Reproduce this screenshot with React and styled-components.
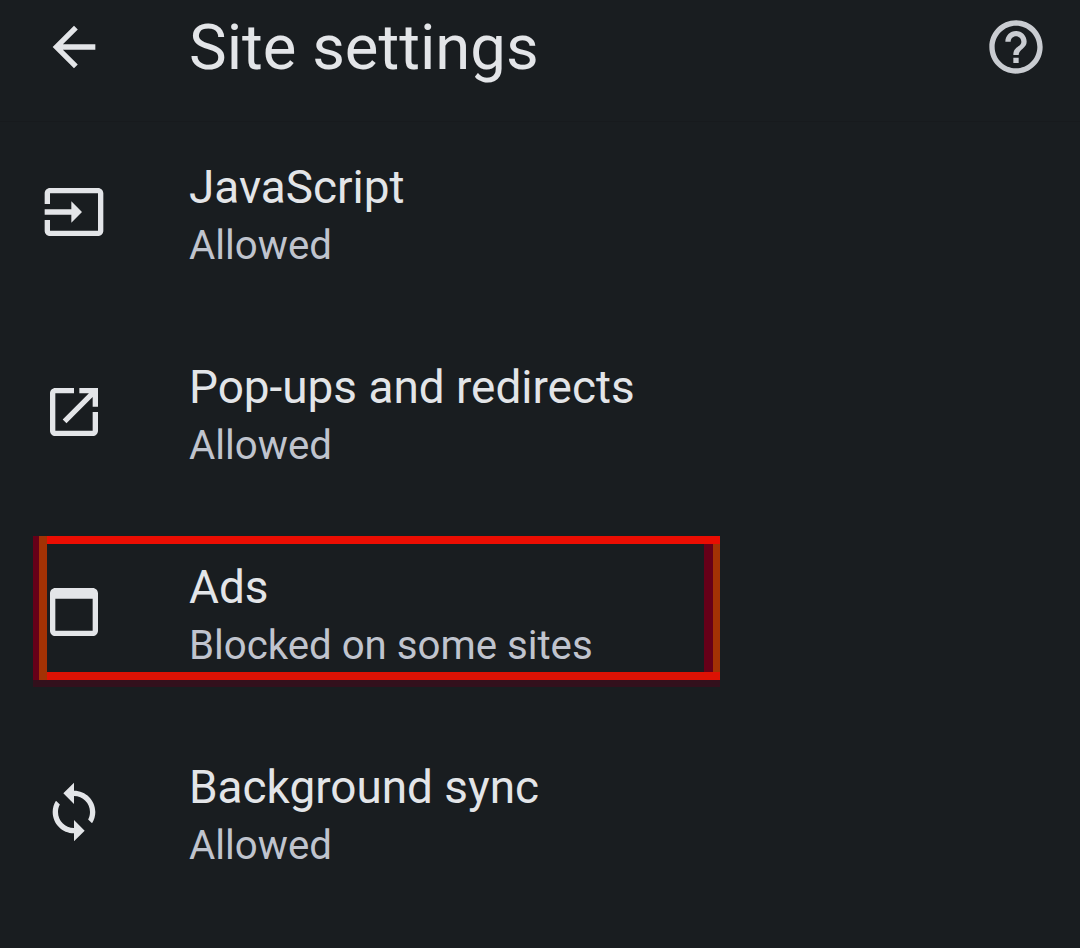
import React from "react";
import styled, { createGlobalStyle } from "styled-components";

const GlobalStyle = createGlobalStyle`
  html, body {
    margin: 0;
    padding: 0;
    background: #191d20;
  }
`;

const Page = styled.div`
  width: 1080px;
  height: 948px;
  overflow: hidden;
  background: #191d20;
  font-family: Roboto, "Liberation Sans", sans-serif;
`;

const Header = styled.header`
  height: 122px;
  box-sizing: border-box;
  padding: 0 32px 28px 42px;
  display: flex;
  align-items: center;
  border-bottom: 1px solid #171a1d;
`;

const Title = styled.h1`
  flex: 1;
  margin: 0 0 0 83px;
  font-size: 63.4px;
  line-height: 68px;
  font-weight: 400;
  color: #e3e5e8;
`;

const Icon = styled.svg`
  width: 64px;
  height: 64px;
  flex: none;
  fill: ${props => props.color || "#e3e5e8"};
`;

const Row = styled.div`
  height: 200px;
  box-sizing: border-box;
  padding: 0 0 21px 42px;
  display: flex;
  align-items: center;
`;

const RowText = styled.div`
  margin-left: 83px;
  padding-top: 10px;
`;

const RowTitle = styled.div`
  font-size: 45.9px;
  line-height: 58px;
  color: #e3e5e8;
`;

const RowStatus = styled.div`
  margin-top: 1px;
  font-size: 40.2px;
  line-height: 58px;
  color: #c0c4ce;
`;

const Highlight = styled.div`
  position: absolute;
  left: 33px;
  top: 536px;
  width: 687px;
  height: 144px;
  box-sizing: border-box;
  border-top: 8px solid #ea0d02;
  border-bottom: 8px solid #dd1204;
  box-shadow: 0 7px 0 #33101c;

  &::before {
    content: "";
    position: absolute;
    top: -8px;
    bottom: -8px;
    left: 0;
    width: 6px;
    background: #660018;
  }

  &::after {
    content: "";
    position: absolute;
    top: -8px;
    bottom: -8px;
    left: 6px;
    width: 8px;
    background: #a33204;
  }
`;

const HighlightRight = styled.div`
  position: absolute;
  top: 0;
  bottom: 0;
  right: 0;
  width: 16px;
  border-left: 9px solid #660018;
  border-right: 7px solid #a33204;
  box-sizing: border-box;
`;

const settings = [
  {
    name: "JavaScript",
    status: "Allowed",
    icon: "M21 3.01H3c-1.1 0-2 .9-2 2V9h2V4.99h18v14.03H3V15H1v4.01c0 1.1.9 1.98 2 1.98h18c1.1 0 2-.88 2-1.98v-14c0-1.11-.9-2-2-2zM11 16l4-4-4-4v3H1v2h10v3z"
  },
  {
    name: "Pop-ups and redirects",
    status: "Allowed",
    icon: "M19 19H5V5h7V3H5c-1.11 0-2 .9-2 2v14c0 1.1.89 2 2 2h14c1.1 0 2-.9 2-2v-7h-2v7zM14 3v2h3.59l-9.83 9.83 1.41 1.41L19 6.41V10h2V3h-7z"
  },
  {
    name: "Ads",
    status: "Blocked on some sites",
    icon: "M19 3H5c-1.1 0-2 .9-2 2v14c0 1.1.9 2 2 2h14c1.1 0 2-.9 2-2V5c0-1.1-.9-2-2-2zm0 16H5V7h14v12z"
  },
  {
    name: "Background sync",
    status: "Allowed",
    icon: "M12 4V1L8 5l4 4V6c3.31 0 6 2.69 6 6 0 1.01-.25 1.97-.7 2.8l1.46 1.46C19.54 15.03 20 13.57 20 12c0-4.42-3.58-8-8-8zm0 14c-3.31 0-6-2.69-6-6 0-1.01.25-1.97.7-2.8L5.24 7.74C4.46 8.97 4 10.43 4 12c0 4.42 3.58 8 8 8v3l4-4-4-4v3z"
  }
];

const backArrow = "M20 11H7.83l5.59-5.59L12 4l-8 8 8 8 1.41-1.41L7.83 13H20v-2z";
const helpCircle = "M11 18h2v-2h-2v2zm1-16C6.48 2 2 6.48 2 12s4.48 10 10 10 10-4.48 10-10S17.52 2 12 2zm0 18c-4.41 0-8-3.59-8-8s3.59-8 8-8 8 3.59 8 8-3.59 8-8 8zm0-14c-2.21 0-4 1.79-4 4h2c0-1.1.9-2 2-2s2 .9 2 2c0 2-3 1.75-3 5h2c0-2.25 3-2.5 3-5 0-2.21-1.79-4-4-4z";

export default function App() {
  return (
    <Page>
      <GlobalStyle />
      <Header>
        <Icon viewBox="0 0 24 24">
          <path d={backArrow} />
        </Icon>
        <Title>Site settings</Title>
        <Icon viewBox="0 0 24 24" color="#c9ccd1">
          <path d={helpCircle} />
        </Icon>
      </Header>
      {settings.map(item => (
        <Row key={item.name}>
          <Icon viewBox="0 0 24 24">
            <path d={item.icon} />
          </Icon>
          <RowText>
            <RowTitle>{item.name}</RowTitle>
            <RowStatus>{item.status}</RowStatus>
          </RowText>
        </Row>
      ))}
      <Highlight>
        <HighlightRight />
      </Highlight>
    </Page>
  );
}
